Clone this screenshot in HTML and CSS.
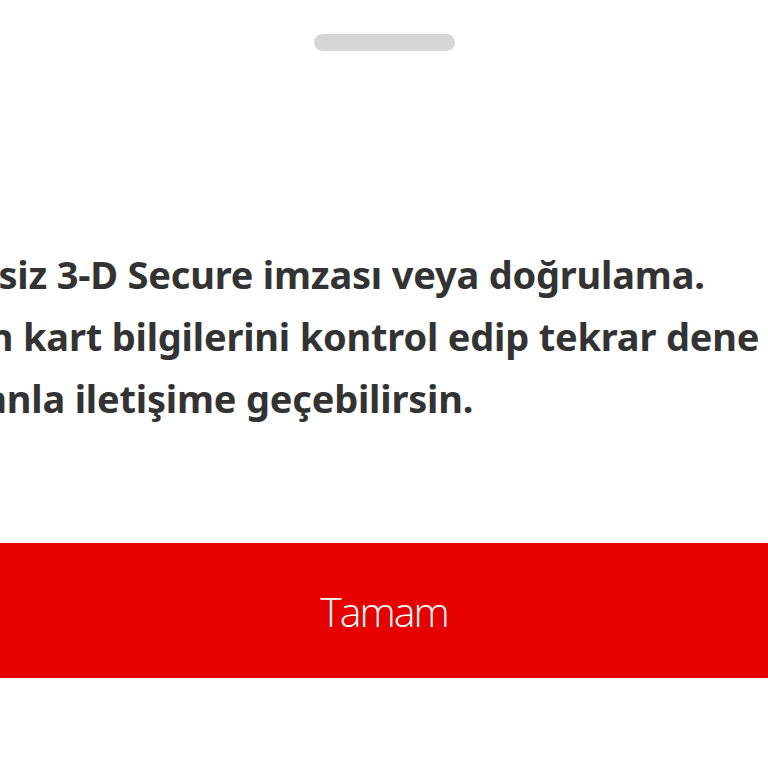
FILE: index.html
```html
<!DOCTYPE html>
<html lang="tr">
<head>
    <meta charset="UTF-8">
    <meta name="viewport" content="width=device-width, initial-scale=1.0">
    <title>Ödeme hatası</title>
    <link rel="stylesheet" href="styles.css">
</head>
<body>

<div class="sheet">
    <div class="handle"></div>
    <div class="message">
        <p>Geçersiz 3-D Secure imzası veya doğrulama.</p>
        <p>Lütfen kart bilgilerini kontrol edip tekrar dene veya</p>
        <p>bankanla iletişime geçebilirsin.</p>
    </div>
    <button type="button" class="ok-button">Tamam</button>
</div>

</body>
</html>
```

FILE: styles.css
```css
body {
    margin: 0;
    background-color: #fff;
    font-family: "Noto Sans", "Open Sans", sans-serif;
    height: 768px;
    overflow: hidden;
}

.sheet {
    padding-top: 34px;
    overflow: hidden;
}

.handle {
    width: 141px;
    height: 17px;
    margin: 0 auto;
    border-radius: 9px;
    background-color: #d6d6d6;
}

.message {
    margin-top: 192px;
    margin-left: -110px;
    color: #333;
    font-size: 38px;
    font-weight: 700;
    letter-spacing: -0.2px;
    line-height: 62px;
    white-space: nowrap;
}

.message p {
    margin: 0;
}

.ok-button {
    display: block;
    width: 100%;
    height: 135px;
    margin-top: 114px;
    border: none;
    background-color: #e60000;
    color: #fff;
    font-family: "Open Sans", sans-serif;
    font-size: 41px;
    font-weight: 300;
    letter-spacing: -2px;
    cursor: pointer;
}
```
